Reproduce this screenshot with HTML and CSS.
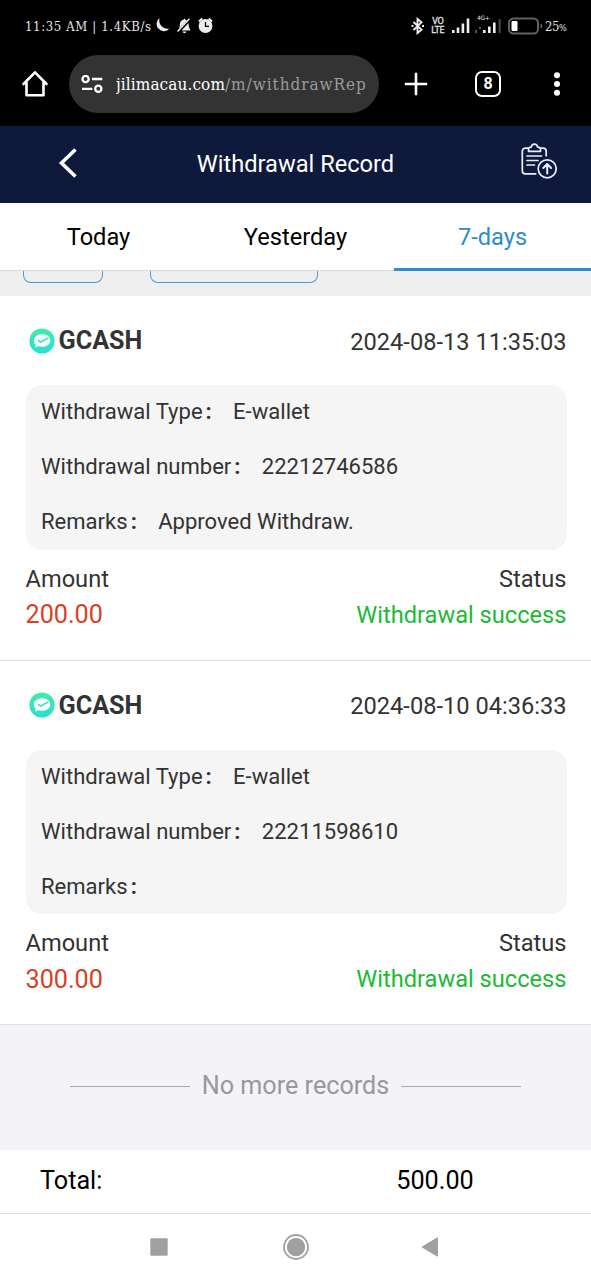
FILE: index.html
```html
<!DOCTYPE html>
<html lang="en">
<head>
<meta charset="utf-8">
<title>Withdrawal Record</title>
<link rel="stylesheet" href="styles.css">
</head>
<body>
<svg width="0" height="0" class="defs">
  <defs>
    <linearGradient id="mint" x1="0" y1="0" x2="0" y2="1"><stop offset="0" stop-color="#46e9ac"/><stop offset="1" stop-color="#28dfd0"/></linearGradient>
    <symbol id="wallet" viewBox="0 0 26 26">
      <circle cx="13" cy="13" r="12.600" fill="url(#mint)"/>
      <path d="M13 6.200c5 0 8.300 2.500 8.300 6.200s-3.300 6.300-8.300 6.300c-1.300 0-2.500-.2-3.600-.5l-3.600 1.200 1-2.700C5.400 15.600 4.900 14.200 4.900 12.400c0-3.700 3.600-6.200 8.100-6.200z" fill="#f4fffc"/>
      <path d="M8.800 12l2.700 2.200L19.500 9.800" fill="none" stroke="#3bd9b5" stroke-width="1.500"/>
    </symbol>
  </defs>
</svg>
<div class="status">
  <span class="clock">11:35 AM | 1.4KB/s</span>
  <svg class="status-left" width="60" height="18" viewBox="0 0 60 18" fill="#ececec">
    <path d="M4.500 1a7.300 7.300 0 1 0 10 10.500C8.500 12.800 3 8 4.500 1z"/>
    <path d="M23.500 12.500c1.500-1.500 1-4 1.500-6.200.6-2.300 2-3.300 3.500-3.600l1-1.200 1 1.200 1.500.7-8.500 9.100zm3 1L33.500 6c.3 3 .2 4.500 1.700 6.500v1zM27.700 14.600h3.600c-.5 2.200-3.100 2.200-3.600 0z"/>
    <path d="M22.500 14.500 34.500 1.800" stroke="#ececec" stroke-width="1.500"/>
    <circle cx="50.500" cy="9" r="6.900"/>
    <path d="M43.900 4.500l3.400-3M57.100 4.500l-3.400-3" stroke="#ececec" stroke-width="2"/>
    <path d="M50.500 5v4.300h3.500" fill="none" stroke="#000" stroke-width="1.300"/>
  </svg>
  <div class="status-right">
    <svg width="14" height="18" viewBox="0 0 14 18" fill="none" stroke="#eee" stroke-width="1.900"><path d="M2.500 5l8 7.600L6.500 16V2l4 3.400-8 7.600"/><path d="M.5 9h2M11 9h2"/></svg>
    <span class="volte"><span>VO</span><span>LTE</span></span>
    <svg width="20" height="18" viewBox="0 0 20 18" fill="#eee"><path d="M1 13h2.600v3H1zM5.700 10.500h2.600V16H5.700zM10.600 6.500h2.600V16h-2.600zM15.700 1.500h2.600V16h-2.600z"/></svg>
    <span class="sim"><span class="gen">4G+</span>
      <svg width="28" height="18" viewBox="0 0 28 18" fill="#eee"><path d="M1 13h2v3H1zM5 10h2v2H5z" fill="#555"/><path d="M9 13h2.600v3H9zM14 9.500h2.600V16H14zM19 5.500h2.600V16H19z"/><path d="M24.500 2h2.300v14h-2.300z" fill="#444"/></svg>
    </span>
    <svg width="35" height="18" viewBox="0 0 35 18"><rect x="1" y="1.500" width="29" height="15" rx="4.500" fill="none" stroke="#626262" stroke-width="2"/><rect x="3.500" y="4" width="6" height="10" rx="1" fill="#fff"/><path d="M32.500 7c1.500 1 1.500 3 0 4" fill="none" stroke="#626262" stroke-width="1.500"/></svg>
    <span class="battery">25<small>%</small></span>
  </div>
</div>
<div class="browser">
  <svg class="home" width="28" height="28" viewBox="0 0 28 28" fill="none" stroke="#fff" stroke-width="2.600" stroke-linejoin="round" stroke-linecap="round"><path d="M2.500 14 14 2.300 25.500 14M5.500 12v13.300h17V12"/></svg>
  <div class="pill">
    <svg width="22" height="18" viewBox="0 0 22 18" fill="none" stroke="#fff" stroke-width="2.300"><circle cx="4.600" cy="4" r="3.100"/><path d="M11 4h10.300M1 13.800h10.300"/><circle cx="17.300" cy="13.800" r="3.100"/></svg>
    <span class="url"><span class="host">jilimacau.com</span><span class="path">/m/withdrawRepo</span></span>
  </div>
  <svg class="plus" width="24" height="24" viewBox="0 0 24 24" stroke="#fff" stroke-width="2.600"><path d="M12 .8v22.400M.8 12h22.400"/></svg>
  <span class="count">8</span>
  <svg class="dots" width="8" height="24" viewBox="0 0 8 24" fill="#fff"><circle cx="4" cy="3.300" r="3"/><circle cx="4" cy="12" r="3"/><circle cx="4" cy="20.700" r="3"/></svg>
</div>
<header class="header">
  <svg class="back" width="20" height="32" viewBox="0 0 20 32" fill="none" stroke="#fff" stroke-width="3.600"><path d="M17.500 2.500 3.500 16l14 13.500"/></svg>
  <h1 class="title">Withdrawal Record</h1>
  <svg class="report" width="36" height="36" viewBox="0 0 36 36" fill="none" stroke="#e9edff" stroke-width="1.700" stroke-linecap="round" stroke-linejoin="round">
    <path d="M7 5.200H4.500C2.500 5.200 1.300 6.400 1.300 8.300v19.400c0 2 1.200 3.200 3.200 3.200h10.200M20 5.200h2c2 0 3.200 1.200 3.200 3.100v4.400"/>
    <path d="M7.500 8.300V6c0-1.300 1-1.800 2.700-1.800C10.500 2.200 11.600 1.200 13.400 1.200s2.900 1 3.200 3c1.700 0 2.900.5 2.900 1.800v2.300z"/>
    <path d="M6 13h14.500M6 17.500h11M6 22h7.500"/><circle cx="26.200" cy="25.800" r="9"/><path d="M26.200 30.500v-9M22.300 25l3.900-4 3.900 4" stroke-width="2"/>
  </svg>
</header>
<nav class="tabs"><a class="tab">Today</a><a class="tab">Yesterday</a><a class="tab active">7-days</a></nav>
<div class="filters"><i class="chip"></i><i class="chip wide"></i></div>
<main>
  <section class="record">
    <div class="row head"><span class="brand"><svg width="26" height="26"><use href="#wallet"/></svg>GCASH</span><time>2024-08-13 11:35:03</time></div>
    <dl class="box">
      <div><dt>Withdrawal Type<b class="colon">:</b></dt><dd>E-wallet</dd></div>
      <div><dt>Withdrawal number<b class="colon">:</b></dt><dd>22212746586</dd></div>
      <div><dt>Remarks<b class="colon">:</b></dt><dd>Approved Withdraw.</dd></div>
    </dl>
    <div class="row labels"><span>Amount</span><span>Status</span></div>
    <div class="row values"><span class="amount">200.00</span><span class="success">Withdrawal success</span></div>
  </section>
  <section class="record">
    <div class="row head"><span class="brand"><svg width="26" height="26"><use href="#wallet"/></svg>GCASH</span><time>2024-08-10 04:36:33</time></div>
    <dl class="box">
      <div><dt>Withdrawal Type<b class="colon">:</b></dt><dd>E-wallet</dd></div>
      <div><dt>Withdrawal number<b class="colon">:</b></dt><dd>22211598610</dd></div>
      <div><dt>Remarks<b class="colon">:</b></dt><dd></dd></div>
    </dl>
    <div class="row labels"><span>Amount</span><span>Status</span></div>
    <div class="row values"><span class="amount">300.00</span><span class="success">Withdrawal success</span></div>
  </section>
  <div class="end"><i class="rule"></i><span>No more records</span><i class="rule"></i></div>
</main>
<footer class="total"><span>Total:</span><span class="sum">500.00</span></footer>
<div class="system">
  <svg width="18" height="18" viewBox="0 0 18 18"><rect x=".3" y=".3" width="17.400" height="17.400" rx="1" fill="#a0a0a0"/></svg>
  <svg width="28" height="28" viewBox="0 0 28 28"><circle cx="14" cy="14" r="12" fill="none" stroke="#a0a0a0" stroke-width="1.800"/><circle cx="14" cy="14" r="9.200" fill="#a0a0a0"/></svg>
  <svg width="18" height="20" viewBox="0 0 18 20"><path d="M1 10 16.500.8v18.400z" fill="#a0a0a0" stroke="#a0a0a0" stroke-linejoin="round"/></svg>
</div>
</body>
</html>
```
FILE: styles.css
```css
* { box-sizing: border-box; }
body { margin: 0; width: 591px; height: 1280px; overflow: hidden; background: #fff; color: #333; font-family: Roboto, "Liberation Sans", sans-serif; }
svg { display: block; flex: none; }
.defs { position: absolute; }

.status { display: flex; align-items: center; height: 52px; padding: 0 24px 0 25px; background: #000; color: #e6e6e6; }
.clock { width: 130px; font: 13px "DejaVu Serif", serif; font-stretch: condensed; white-space: nowrap; letter-spacing: 0.64px; }
.status-right { display: flex; align-items: center; margin-left: auto; }
.volte { display: flex; flex-direction: column; align-items: center; width: 18px; margin: 0 4px 0 4px; font: 8px/9px "DejaVu Sans", sans-serif; -webkit-text-stroke: 0.3px #e6e6e6; }
.sim { position: relative; margin-left: 3px; margin-right: 6px; }
.gen { position: absolute; left: 3px; top: -3px; font: 6px/8px "DejaVu Sans", sans-serif; letter-spacing: -0.4px; }
.battery { width: 22px; margin-left: 2px; font: 13px "DejaVu Serif", serif; font-stretch: condensed; white-space: nowrap; letter-spacing: -0.4px; }
.battery small { font-size: 9px; }

.browser { display: flex; align-items: center; height: 74px; padding: 0 30px 10px 21px; background: #000; }
.pill { display: flex; align-items: center; width: 310px; height: 58px; margin-left: 20px; padding-left: 12px; gap: 13px; border-radius: 29px; background: #333; }
.url { width: 251px; overflow: hidden; white-space: nowrap; font: 17px/28px "DejaVu Serif", serif; font-stretch: condensed; letter-spacing: 0.1px; color: #9b9b9b; }
.path { letter-spacing: 0.95px; }
.host { color: #fff; }
.plus { margin-left: 25px; }
.count { width: 26px; height: 26px; margin-left: 47px; border: 2.600px solid #fff; border-radius: 7px; color: #fff; font: 700 16px/22px Roboto, sans-serif; text-align: center; }
.dots { margin-left: auto; }

.header { display: grid; grid-template-columns: 120px 1fr 120px; align-items: center; height: 77px; padding-bottom: 3px; background: #0f193c; color: #fff; }
.back { margin-left: 58px; }
.title { margin: 1px 0 0; text-align: center; font-size: 23.640px; font-weight: 400; line-height: 30px; }
.report { margin: -5px 0 0 50px; }

.tabs { display: grid; grid-template-columns: repeat(3, 1fr); height: 68px; }
.tab { height: 68px; border-bottom: 1px solid #dadada; color: #000; font-size: 23.640px; line-height: 68px; text-align: center; }
.active { border-bottom: 3px solid #2b8dcc; color: #2b8dcc; }
.filters { display: flex; gap: 47px; height: 25px; padding-left: 23px; background: #efefef; }
.chip { width: 80px; height: 12px; border: 1.500px solid #4b9bd3; border-top: 0; border-radius: 0 0 8px 8px; }
.wide { width: 168px; }

.record { height: 364.500px; padding: 0 24.500px 0 25.500px; border-bottom: 1px solid #dedede; }
.row { display: flex; align-items: center; justify-content: space-between; font-size: 23.640px; }
.head { height: 89px; }
.head time { padding-top: 2px; }
.brand { display: flex; align-items: center; gap: 4px; padding-left: 3px; font-size: 25.200px; font-weight: 700; }
.box { height: 164.500px; margin: 0; padding-left: 15.500px; border-radius: 16px; background: #f5f5f5; font-size: 22.060px; }
.box div { display: flex; align-items: center; height: 55.200px; padding-bottom: 2px; }
.box dt { display: flex; }
.box dd { margin: 0; }
.colon { width: 30.500px; padding-left: 3px; font-weight: 700; }
.labels { height: 36px; margin-top: 11px; }
.values { height: 36px; }
.amount { color: #d93f27; font-size: 25.200px; }
.success { color: #1cba36; }

.end { display: flex; align-items: center; justify-content: center; gap: 12px; height: 125px; padding-bottom: 5px; background: #f3f3f8; color: #999; font-size: 25.200px; }
.rule { width: 120px; height: 1px; margin-top: 2px; background: #aaa; }
.total { display: grid; grid-template-columns: 279px 1fr; align-items: center; height: 64px; padding: 0 40px 2px 40px; border-bottom: 1px solid #dcdcdc; color: #000; font-size: 25.200px; }
.sum { text-align: center; }
.system { display: flex; align-items: center; height: 66px; padding-left: 150px; }
.system svg:nth-child(2) { margin-left: 114px; }
.system svg:nth-child(3) { margin-left: 111px; }
```
